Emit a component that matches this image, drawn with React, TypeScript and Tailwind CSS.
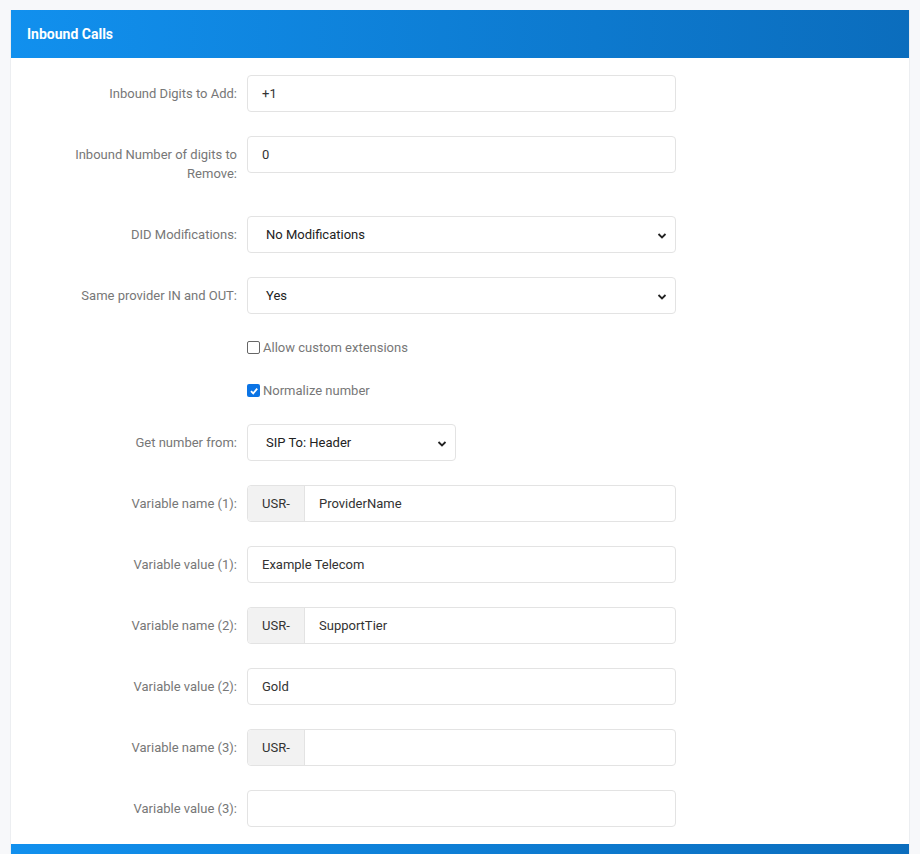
import React from "react";

const inputCls = "h-[37px] w-[429px] rounded-[4px] border border-[#e3e3e3] bg-white px-[14px] text-[13px] text-[#333] outline-none";

function Label({ children }: { children: React.ReactNode }) {
  return <div className="w-[226px] shrink-0 pr-[0px] text-right text-[13px] leading-[19px] text-[#777] py-[9px]">{children}</div>;
}

function Row({ label, children }: { label: React.ReactNode; children: React.ReactNode }) {
  return (
    <div className="mb-[24px] flex items-start">
      <Label>{label}</Label>
      <div className="ml-[10px]">{children}</div>
    </div>
  );
}

function Chevron() {
  return (
    <svg width="10" height="10" viewBox="0 0 10 10" className="absolute right-[8px] top-[14px]">
      <path d="M1.5 3 L5 6.5 L8.5 3" fill="none" stroke="#222" strokeWidth="1.8" />
    </svg>
  );
}

function Select({ value, w = "w-[429px]" }: { value: string; w?: string }) {
  return (
    <div className={`relative flex h-[37px] ${w} items-center rounded-[4px] border border-[#e3e3e3] bg-white pl-[18px] text-[13px] text-[#222]`}>
      {value}
      <Chevron />
    </div>
  );
}

function Prefixed({ value }: { value: string }) {
  return (
    <div className="flex h-[37px] w-[429px] rounded-[4px] border border-[#e3e3e3] bg-white text-[13px] text-[#333]">
      <div className="flex w-[57px] items-center justify-center border-r border-[#e3e3e3] bg-[#f2f2f2] rounded-l-[4px]">USR-</div>
      <div className="flex items-center pl-[14px]">{value}</div>
    </div>
  );
}

function Text({ value }: { value: string }) {
  return <div className={`${inputCls} flex items-center`}>{value}</div>;
}

export default function App() {
  return (
    <div className="min-h-[854px] bg-[#f7f8fa] pt-[10px] pl-[10px] pr-[10px]" style={{ fontFamily: "Roboto, 'Liberation Sans', sans-serif" }}>
      <div className="w-[900px] border-l border-r border-[#eceef1] bg-white">
        <div className="flex h-[48px] items-center bg-gradient-to-r from-[#1190ee] to-[#0b6dbd] pl-[16px] text-[14px] font-bold text-white">Inbound Calls</div>
        <div className="pt-[17px] pb-[-7px]">
          <Row label="Inbound Digits to Add:"><Text value="+1" /></Row>
          <Row label={<>Inbound Number of digits to<br />Remove:</>}><Text value="0" /></Row>
          <Row label="DID Modifications:"><Select value="No Modifications" /></Row>
          <Row label="Same provider IN and OUT:"><Select value="Yes" /></Row>
          <div className="mb-[24px] ml-[236px] flex h-[19px] items-center text-[13px] text-[#777]">
            <span className="mr-[3px] inline-block h-[13px] w-[13px] rounded-[2px] border border-[#666] bg-white" />
            Allow custom extensions
          </div>
          <div className="mb-[24px] ml-[236px] flex h-[19px] items-center text-[13px] text-[#777]">
            <span className="mr-[3px] flex h-[13px] w-[13px] items-center justify-center rounded-[2px] bg-[#0b74e5]">
              <svg width="10" height="10" viewBox="0 0 10 10"><path d="M2 5.2 L4.2 7.4 L8.2 2.6" fill="none" stroke="white" strokeWidth="1.8" /></svg>
            </span>
            Normalize number
          </div>
          <Row label="Get number from:"><Select value="SIP To: Header" w="w-[209px]" /></Row>
          <Row label="Variable name (1):"><Prefixed value="ProviderName" /></Row>
          <Row label="Variable value (1):"><Text value="Example Telecom" /></Row>
          <Row label="Variable name (2):"><Prefixed value="SupportTier" /></Row>
          <Row label="Variable value (2):"><Text value="Gold" /></Row>
          <Row label="Variable name (3):"><Prefixed value="" /></Row>
          <div className="flex items-start pb-[17px]">
            <Label>Variable value (3):</Label>
            <div className="ml-[10px]"><Text value="" /></div>
          </div>
        </div>
        <div className="h-[48px] bg-gradient-to-r from-[#1190ee] to-[#0b6dbd]" />
      </div>
    </div>
  );
}
